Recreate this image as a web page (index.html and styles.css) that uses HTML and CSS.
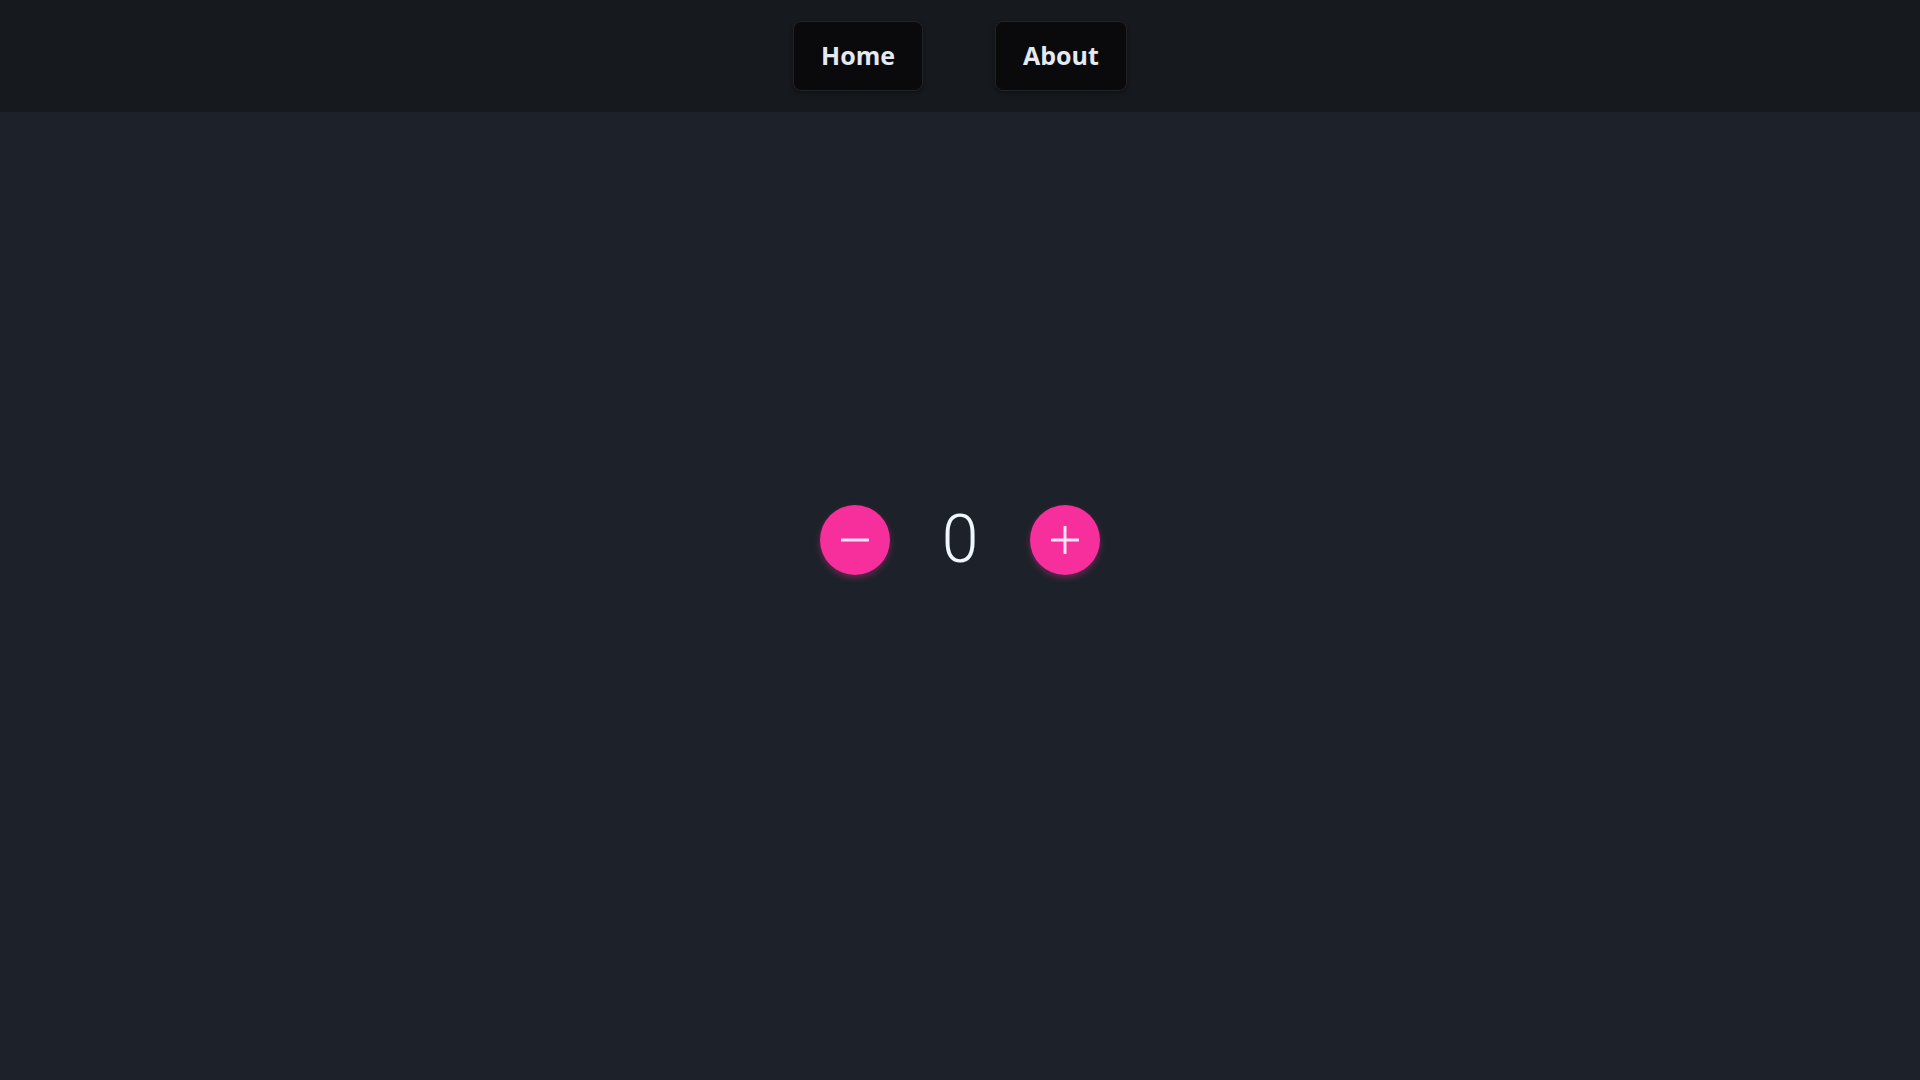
FILE: index.html
```html
<!DOCTYPE html>
<html>
<head>
<meta charset="utf-8">
<link rel="stylesheet" href="styles.css">
</head>
<body>
<nav class="nav">
  <a class="nav-btn" href="#">Home</a>
  <a class="nav-btn" href="#">About</a>
</nav>
<main class="main">
  <div class="counter">
    <button class="round-btn" aria-label="decrement">
      <svg width="28" height="28" viewBox="0 0 28 28"><path d="M1 14H27" stroke="#ffe3f2" stroke-width="3" stroke-linecap="round"/></svg>
    </button>
    <span class="count">0</span>
    <button class="round-btn" aria-label="increment">
      <svg width="28" height="28" viewBox="0 0 28 28"><path d="M1 14H27M14 1V27" stroke="#ffe3f2" stroke-width="3" stroke-linecap="round"/></svg>
    </button>
  </div>
</main>
</body>
</html>
```
FILE: styles.css
```css
html, body {
  margin: 0;
  padding: 0;
  height: 100%;
}
body {
  background: #1d222a;
  font-family: "Open Sans", sans-serif;
  display: flex;
  flex-direction: column;
}
.nav {
  height: 112px;
  flex: none;
  background: #16191e;
  display: flex;
  justify-content: center;
  align-items: center;
  gap: 72px;
  box-sizing: border-box;
}
.nav-btn {
  display: flex;
  align-items: center;
  justify-content: center;
  height: 70px;
  padding: 0 27px 3px;
  box-sizing: border-box;
  background: #0a0a0c;
  border: 1px solid #232428;
  border-radius: 8px;
  color: #e4e9f2;
  font-weight: 700;
  font-size: 25px;
  text-decoration: none;
  box-shadow: 0 2px 4px rgba(0,0,0,0.4);
  margin-top: 0;
}
.main {
  flex: 1;
  display: flex;
  align-items: center;
  justify-content: center;
  padding-bottom: 112px;
}
.counter {
  display: flex;
  align-items: center;
  gap: 52px;
}
.round-btn {
  width: 70px;
  height: 70px;
  border-radius: 50%;
  border: none;
  background: #f72f9c;
  display: flex;
  align-items: center;
  justify-content: center;
  padding: 0;
  box-shadow: 0 3px 6px rgba(247, 47, 156, 0.35);
}
.count {
  font-family: Roboto, sans-serif;
  font-weight: 300;
  font-size: 66px;
  color: #eef6ff;
  line-height: 1;
}
```
